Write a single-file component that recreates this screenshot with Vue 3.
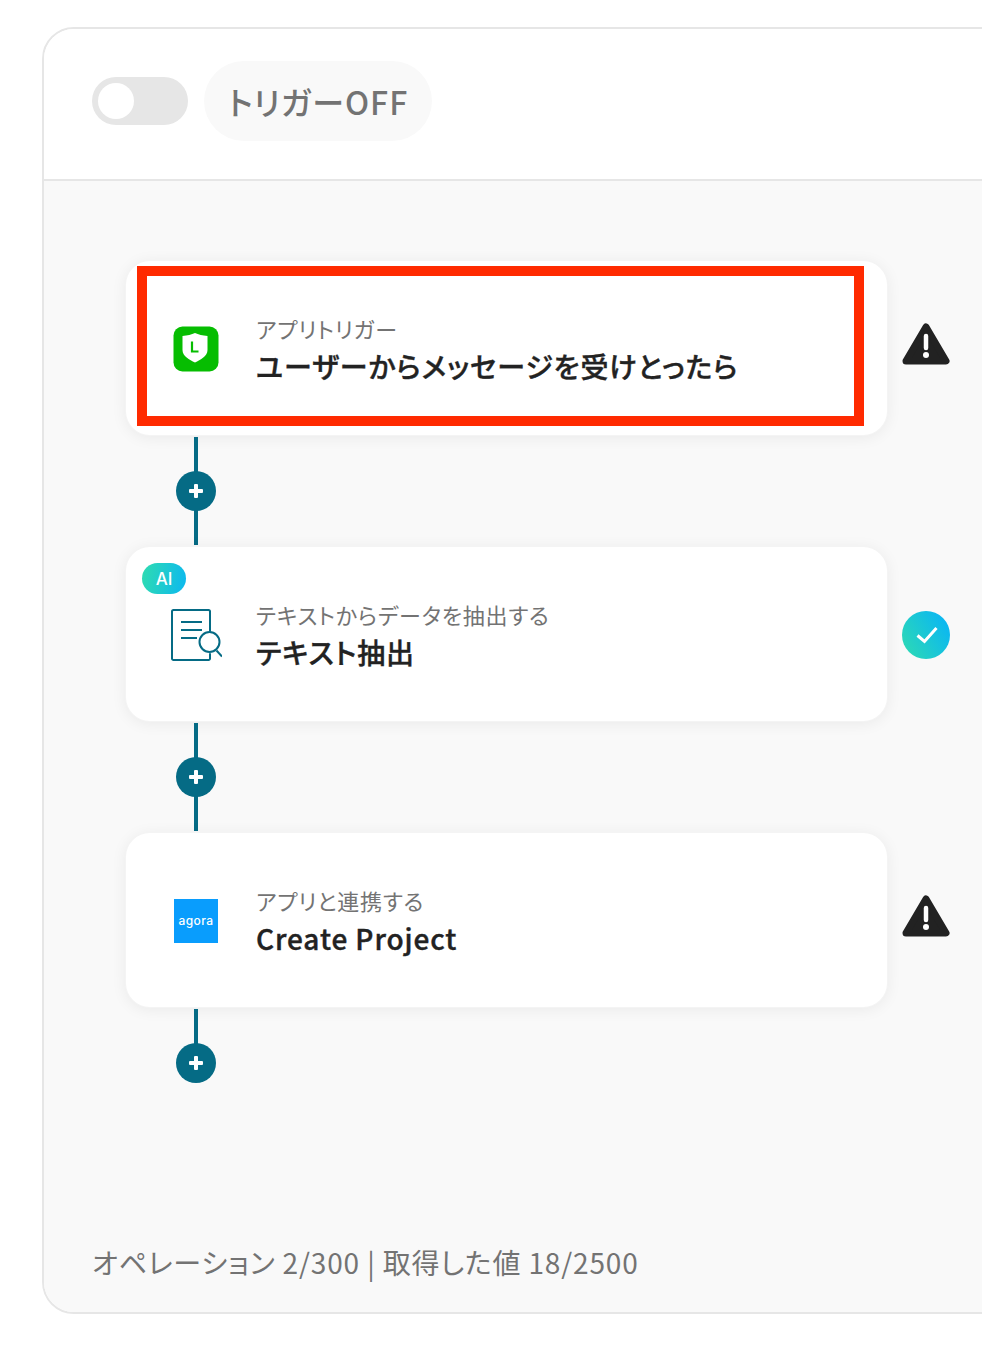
<template>
  <div class="page">
    <div class="panel">
      <div class="head">
        <div class="toggle"><span class="knob"></span></div>
        <div class="status">トリガーOFF</div>
      </div>
      <div class="body">
        <div class="flow">
          <div v-for="step in steps" :key="step.title" class="step">
            <div class="row">
              <div class="card">
                <span v-if="step.ai" class="ai">AI</span>
                <div class="icon">
                  <svg v-if="step.icon === 'line'" class="low" width="46" height="46" viewBox="0 0 46 46">
                    <rect x="0.5" y="0.5" width="45" height="45" rx="9" fill="#06bd01" />
                    <path d="M22 7c3.500 1.500 7.500 2.500 12.500 3v14c0 6-7 10-12.500 12.500C16.500 34 9.500 30 9.500 24V10C14.500 9.500 18.500 8.500 22 7z" fill="#fff" />
                    <path d="M19 15.500v10h6.500" fill="none" stroke="#06bd01" stroke-width="2.200" />
                  </svg>
                  <svg v-else-if="step.icon === 'doc'" width="52" height="54" viewBox="0 0 52 54" fill="none" stroke="#056b85" stroke-width="2">
                    <path d="M40 24V4.500A1.500 1.500 0 0 0 38.500 3h-35A1.500 1.500 0 0 0 2 4.500v47A1.500 1.500 0 0 0 3.500 53h35a1.500 1.500 0 0 0 1.500-1.500V47" stroke-linecap="round" />
                    <path d="M11 15h21M11 23h21M11 31h16" />
                    <circle cx="39.500" cy="35" r="10" />
                    <path d="M46.500 43.500l5.500 6" />
                  </svg>
                  <div v-else class="agora low">agora</div>
                </div>
                <div class="text">
                  <div class="label">{{ step.label }}</div>
                  <div class="title">{{ step.title }}</div>
                </div>
                <div v-if="step.marked" class="mark"></div>
              </div>
              <div class="state">
                <svg v-if="step.ok" class="ok" width="48" height="48" viewBox="0 0 48 48">
                  <defs>
                    <linearGradient id="okGrad" x1="0" y1="1" x2="1" y2="0.4">
                      <stop offset="0" stop-color="#2fdcb0" />
                      <stop offset="1" stop-color="#0cb8f0" />
                    </linearGradient>
                  </defs>
                  <circle cx="24" cy="24" r="24" fill="url(#okGrad)" />
                  <path d="M15.500 24.500l7 6L34.500 17" fill="none" stroke="#fff" stroke-width="3" />
                </svg>
                <svg v-else class="warn" width="48" height="44" viewBox="0 0 48 44">
                  <path d="M24 5 L44 39 H4 Z" fill="#222" stroke="#222" stroke-width="7" stroke-linejoin="round" />
                  <path d="M24 14v12" stroke="#fff" stroke-width="4.500" stroke-linecap="round" />
                  <circle cx="24" cy="33" r="3" fill="#fff" />
                </svg>
              </div>
            </div>
            <div class="link">
              <span class="plus"></span>
            </div>
          </div>
        </div>
        <div class="foot">オペレーション 2/300 | 取得した値 18/2500</div>
      </div>
    </div>
  </div>
</template>

<script setup>
const steps = [
  { label: 'アプリトリガー', title: 'ユーザーからメッセージを受けとったら', icon: 'line', marked: true },
  { label: 'テキストからデータを抽出する', title: 'テキスト抽出', icon: 'doc', ai: true, ok: true },
  { label: 'アプリと連携する', title: 'Create Project', icon: 'agora' },
]
</script>

<style>
html, body {
  background: #fff;
}
</style>

<style scoped>
.page {
  width: 982px;
  height: 1346px;
  overflow: hidden;
  padding: 27px 0 0 42px;
  box-sizing: border-box;
  font-family: "Noto Sans CJK JP", "Noto Sans", sans-serif;
  font-feature-settings: "palt";
}
.panel {
  width: 1100px;
  height: 1287px;
  box-sizing: border-box;
  border: 2px solid #e6e6e6;
  border-radius: 32px;
  overflow: hidden;
  display: flex;
  flex-direction: column;
}
.head {
  height: 152px;
  flex: none;
  box-sizing: border-box;
  border-bottom: 2px solid #e6e6e6;
  padding: 32px 0 0 48px;
  display: flex;
  align-items: flex-start;
  gap: 16px;
  background: #fff;
}
.toggle {
  margin-top: 16px;
  width: 96px;
  height: 48px;
  border-radius: 24px;
  background: #e6e6e6;
  padding: 6px;
  box-sizing: border-box;
}
.knob {
  display: block;
  width: 36px;
  height: 36px;
  border-radius: 50%;
  background: #fff;
}
.status {
  height: 80px;
  line-height: 80px;
  padding: 0 24px;
  border-radius: 40px;
  background: #f9f9f9;
  color: #737373;
  font-size: 32px;
  font-weight: 500;
  letter-spacing: 1px;
}
.body {
  flex: 1;
  background: #f9f9f9;
  display: flex;
  flex-direction: column;
  justify-content: space-between;
  padding: 80px 0 30px 82px;
}
.flow {
  display: flex;
  flex-direction: column;
}
.row {
  display: flex;
  align-items: center;
  gap: 15px;
}
.card {
  position: relative;
  width: 761px;
  height: 174px;
  box-sizing: border-box;
  border-radius: 24px;
  background: #fff;
  box-shadow: 0 0 0 1px #f4f4f4, 0 2px 16px rgba(0, 0, 0, 0.07);
  display: flex;
  align-items: center;
  padding-left: 40px;
}
.ai {
  position: absolute;
  left: 16px;
  top: 16px;
  width: 44px;
  height: 31px;
  line-height: 33px;
  border-radius: 16px;
  background: linear-gradient(100deg, #2fdcb0, #0cb8f0);
  color: #fff;
  text-align: center;
  font-family: "Inter", sans-serif;
  font-size: 17px;
  font-weight: 500;
}
.icon {
  width: 60px;
  height: 60px;
  flex: none;
  display: flex;
  align-items: center;
  justify-content: center;
}
.low {
  margin-top: 2px;
}
.agora {
  width: 44px;
  height: 44px;
  background: #099dfd;
  color: #fff;
  font-family: "Inter", sans-serif;
  font-size: 12px;
  font-weight: 500;
  letter-spacing: 0.4px;
  line-height: 43px;
  text-align: center;
}
.text {
  margin-left: 30px;
  padding-top: 3px;
}
.label {
  color: #737373;
  font-size: 22px;
  line-height: 30px;
  font-weight: 400;
  letter-spacing: 0.8px;
}
.title {
  margin-top: 3px;
  color: #222;
  font-size: 28px;
  line-height: 40px;
  font-weight: 500;
  letter-spacing: 0.9px;
  -webkit-text-stroke: 0.4px #222;
}
.mark {
  position: absolute;
  left: 11px;
  top: 5px;
  width: 727px;
  height: 160px;
  box-sizing: border-box;
  border: 10px solid #ff2a00;
}
.state {
  width: 48px;
  display: flex;
  justify-content: center;
}
.warn {
  margin-top: -8px;
}
.ok {
  margin-top: 2px;
}
.link {
  position: relative;
  width: 4px;
  height: 108px;
  margin: 2px 0 2px 68px;
  background: #056b85;
}
.step:last-child .link {
  height: 72px;
}
.plus {
  position: absolute;
  left: -18px;
  top: 34px;
  width: 40px;
  height: 40px;
  border-radius: 50%;
  background: #056b85;
}
.plus::before,
.plus::after {
  content: "";
  position: absolute;
  background: #fff;
  border-radius: 1px;
}
.plus::before {
  left: 13px;
  top: 18px;
  width: 14px;
  height: 4px;
}
.plus::after {
  left: 18px;
  top: 13px;
  width: 4px;
  height: 14px;
}
.foot {
  color: #737373;
  font-size: 28px;
  line-height: 40px;
  font-weight: 400;
  letter-spacing: 0.85px;
  margin-left: -34px;
}
</style>
